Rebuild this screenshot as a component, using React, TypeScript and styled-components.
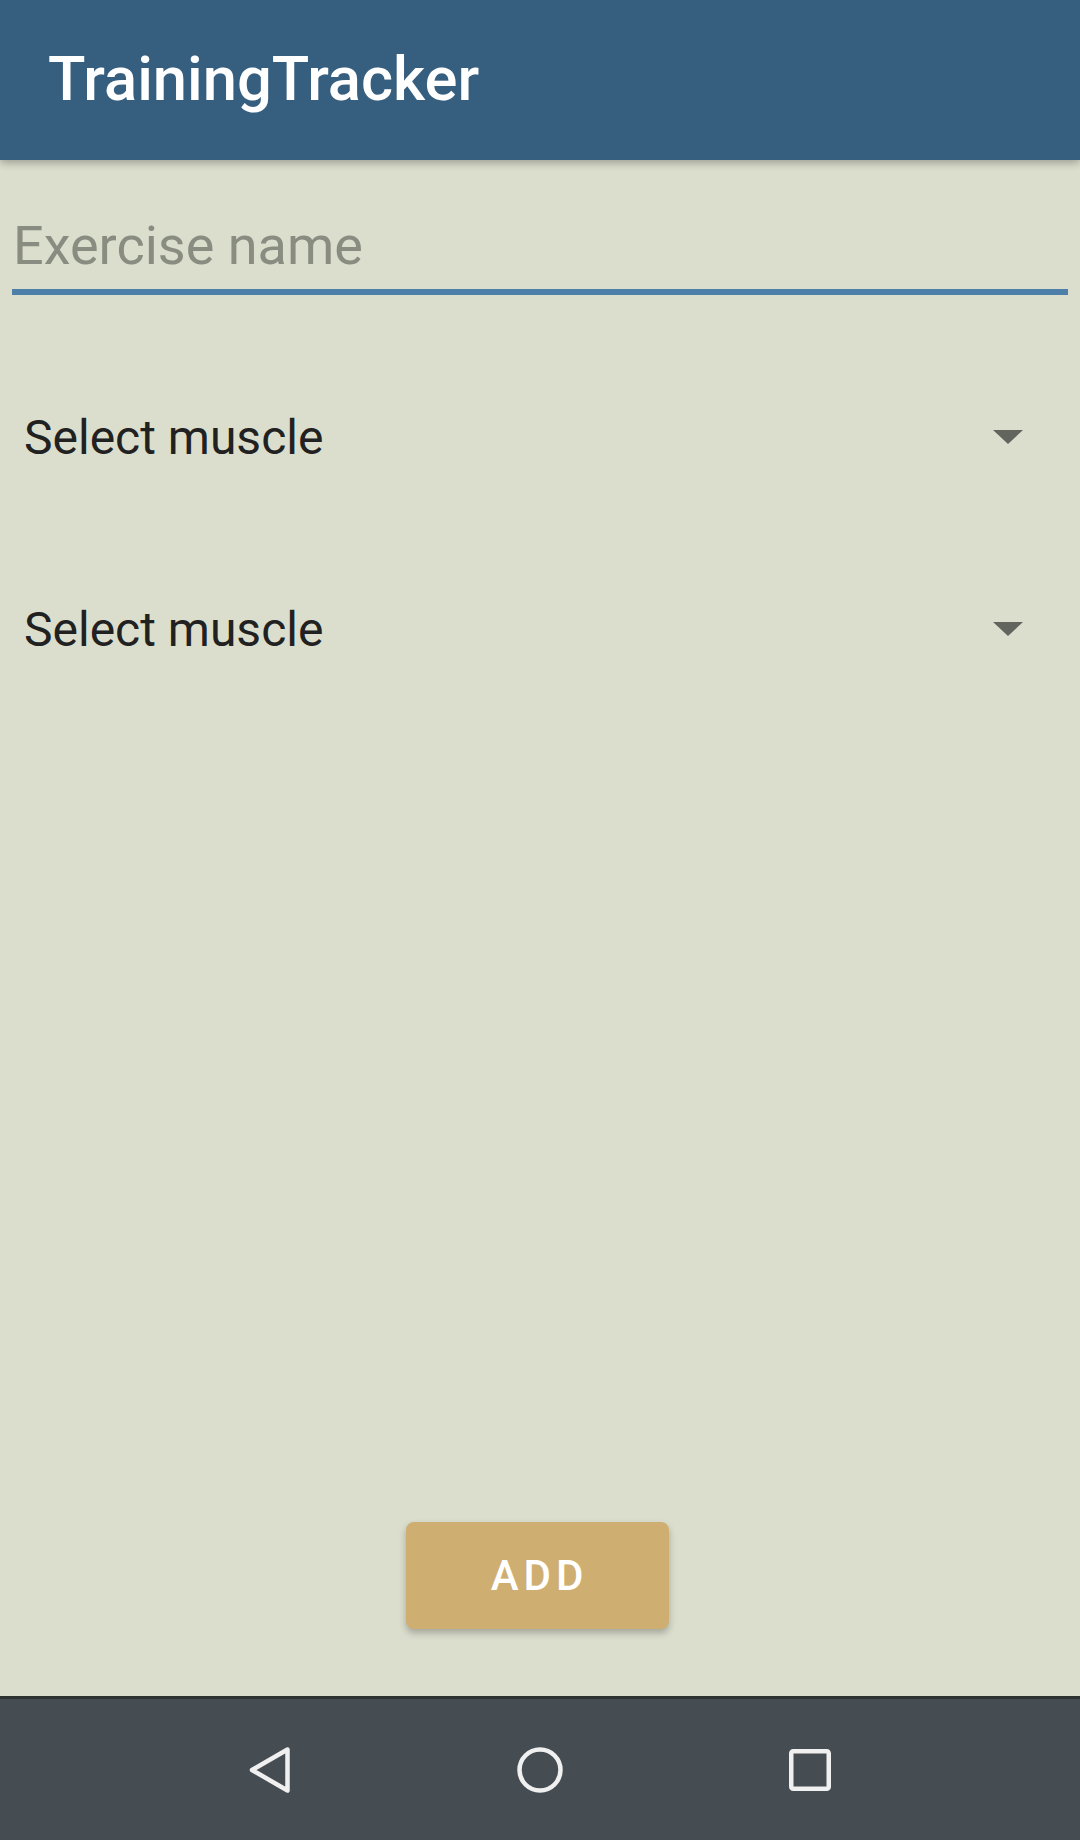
import React from "react";
import styled, { createGlobalStyle } from "styled-components";

const Global = createGlobalStyle`
  html, body { margin: 0; padding: 0; background: #dbdecd; }
  body { font-family: Roboto, "Noto Sans", "Liberation Sans", sans-serif; }
  * { box-sizing: border-box; }
`;

const Screen = styled.div`
  width: 1080px;
  height: 1840px;
  display: flex;
  flex-direction: column;
  background: #dbdecd;
  overflow: hidden;
`;

const AppBar = styled.header`
  height: 160px;
  flex: none;
  display: flex;
  align-items: center;
  padding: 0 0 3px 48px;
  background: #365e7f;
  box-shadow: 0 3px 8px rgba(0, 0, 0, 0.28);
  position: relative;
  z-index: 1;
`;

const Title = styled.h1`
  margin: 0;
  font-family: Roboto, "Noto Sans", sans-serif;
  font-weight: 500;
  font-size: 61.5px;
  color: #ffffff;
`;

const Content = styled.main`
  flex: 1;
  display: flex;
  flex-direction: column;
  padding-top: 52px;
`;

const NameInput = styled.input`
  display: block;
  margin: 0 12px;
  width: calc(100% - 24px);
  height: 83px;
  padding: 0 0 11px 1px;
  border: none;
  border-bottom: 6px solid #4e7fa9;
  background: transparent;
  outline: none;
  font-family: Roboto, "Noto Sans", sans-serif;
  font-size: 54px;
  line-height: 66px;
  color: #212121;
  &::placeholder {
    color: #898c80;
  }
`;

const Spinners = styled.div`
  display: flex;
  flex-direction: column;
  gap: 48px;
  margin-top: 70px;
`;

const SpinnerRow = styled.div`
  height: 144px;
  display: flex;
  align-items: center;
  justify-content: space-between;
  padding: 0 57px 0 24px;
`;

const SpinnerLabel = styled.span`
  font-family: Roboto, "Noto Sans", sans-serif;
  font-size: 48px;
  color: #212121;
`;

const AddButton = styled.button`
  margin: auto auto 67px;
  width: 263px;
  height: 107px;
  border: none;
  border-radius: 8px;
  background: #cfae71;
  box-shadow: 0 4px 7px rgba(0, 0, 0, 0.25);
  color: #ffffff;
  font-family: Roboto, "Noto Sans", sans-serif;
  font-weight: 500;
  font-size: 42px;
  letter-spacing: 5px;
  padding: 0 0 0 5px;
  transform: translateX(-3px);
`;

const NavBar = styled.nav`
  height: 144px;
  flex: none;
  display: flex;
  align-items: center;
  justify-content: center;
  gap: 210px;
  background: #454d53;
  border-top: 3px solid #2d3330;
`;

const NavIcon = styled.svg`
  width: 60px;
  height: 60px;
  display: block;
`;

const Caret = () => (
  <svg width="30" height="14" viewBox="0 0 30 14">
    <path d="M0 0 L30 0 L15 14 Z" fill="#62655e" />
  </svg>
);

const stroke = {
  fill: "none",
  stroke: "#f0f0f0",
  strokeWidth: 4.5,
  strokeLinejoin: "round" as const,
};

export default function App() {
  return (
    <Screen>
      <Global />
      <AppBar>
        <Title>TrainingTracker</Title>
      </AppBar>
      <Content>
        <NameInput placeholder="Exercise name" />
        <Spinners>
          <SpinnerRow>
            <SpinnerLabel>Select muscle</SpinnerLabel>
            <Caret />
          </SpinnerRow>
          <SpinnerRow>
            <SpinnerLabel>Select muscle</SpinnerLabel>
            <Caret />
          </SpinnerRow>
        </Spinners>
        <AddButton>ADD</AddButton>
      </Content>
      <NavBar>
        <NavIcon viewBox="0 0 60 60">
          <path d="M47.5 9.5 L12 30 L47.5 50.5 Z" {...stroke} />
        </NavIcon>
        <NavIcon viewBox="0 0 60 60">
          <circle cx="30" cy="30" r="20.5" {...stroke} />
        </NavIcon>
        <NavIcon viewBox="0 0 60 60">
          <rect x="11.25" y="11.25" width="37.5" height="37.5" rx="2" {...stroke} />
        </NavIcon>
      </NavBar>
    </Screen>
  );
}
